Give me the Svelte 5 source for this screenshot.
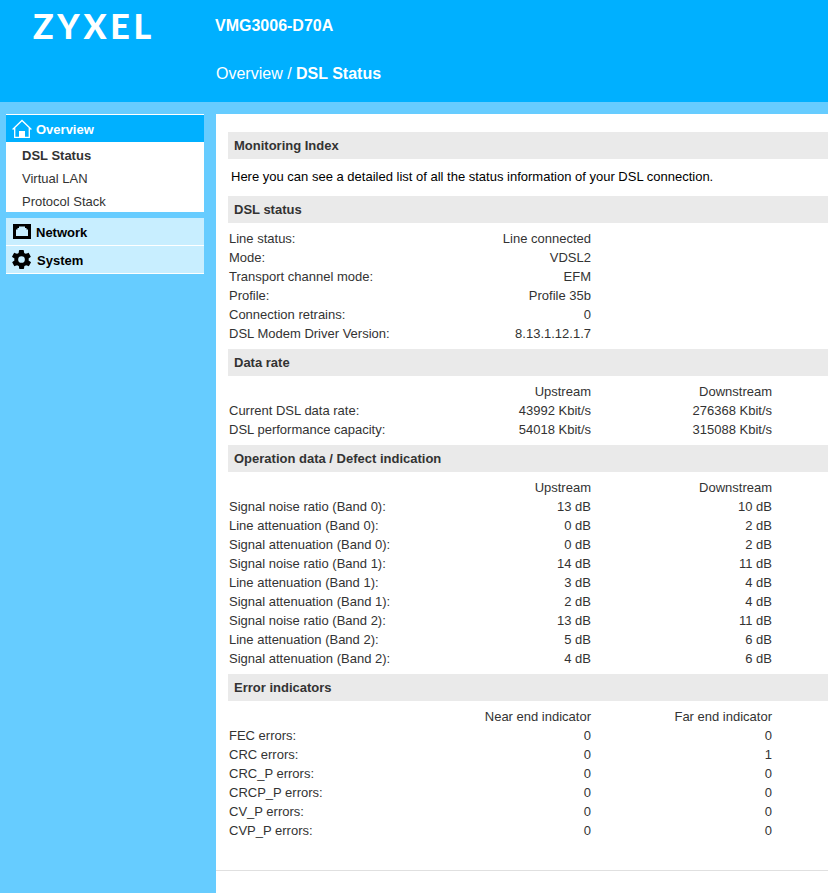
<script>
	const subMenu = [
		{ label: "DSL Status", active: true },
		{ label: "Virtual LAN" },
		{ label: "Protocol Stack" },
	]

	const sections = [
		{
			title: "DSL status",
			rows: [
				["Line status:", "Line connected", ""],
				["Mode:", "VDSL2", ""],
				["Transport channel mode:", "EFM", ""],
				["Profile:", "Profile 35b", ""],
				["Connection retrains:", "0", ""],
				["DSL Modem Driver Version:", "8.13.1.12.1.7", ""],
			],
		},
		{
			title: "Data rate",
			rows: [
				["", "Upstream", "Downstream"],
				["Current DSL data rate:", "43992 Kbit/s", "276368 Kbit/s"],
				["DSL performance capacity:", "54018 Kbit/s", "315088 Kbit/s"],
			],
		},
		{
			title: "Operation data / Defect indication",
			rows: [
				["", "Upstream", "Downstream"],
				["Signal noise ratio (Band 0):", "13 dB", "10 dB"],
				["Line attenuation (Band 0):", "0 dB", "2 dB"],
				["Signal attenuation (Band 0):", "0 dB", "2 dB"],
				["Signal noise ratio (Band 1):", "14 dB", "11 dB"],
				["Line attenuation (Band 1):", "3 dB", "4 dB"],
				["Signal attenuation (Band 1):", "2 dB", "4 dB"],
				["Signal noise ratio (Band 2):", "13 dB", "11 dB"],
				["Line attenuation (Band 2):", "5 dB", "6 dB"],
				["Signal attenuation (Band 2):", "4 dB", "6 dB"],
			],
		},
		{
			title: "Error indicators",
			rows: [
				["", "Near end indicator", "Far end indicator"],
				["FEC errors:", "0", "0"],
				["CRC errors:", "0", "1"],
				["CRC_P errors:", "0", "0"],
				["CRCP_P errors:", "0", "0"],
				["CV_P errors:", "0", "0"],
				["CVP_P errors:", "0", "0"],
			],
		},
	]
</script>

<div class="page">
	<header class="top">
		<div class="logo">ZYXEL</div>
		<div class="titles">
			<div class="model">VMG3006-D70A</div>
			<div class="crumb">Overview / <b>DSL Status</b></div>
		</div>
	</header>

	<div class="body">
		<nav class="side">
			<div class="menu-head open">
				<svg width="20" height="20" viewBox="0 0 20 20" fill="none" stroke="#fff" stroke-width="1.3">
					<path d="M.6 10.500 10 1.500l9.400 9" />
					<path d="M2.700 9v9.300h14.600V9" />
					<rect x="7" y="12" width="6" height="6.500" fill="#fff" stroke="none" />
				</svg>
				<span>Overview</span>
			</div>
			<ul class="sub">
				{#each subMenu as item}
					<li class:active={item.active}>{item.label}</li>
				{/each}
			</ul>

			<div class="menu-head closed first">
				<svg width="18" height="15" viewBox="0 0 18 15">
					<path fill-rule="evenodd" fill="#000" d="M0 0h18v15H0zM3 12h12V5.500h-1.500V4H12V2.500H6V4H4.500v1.500H3z" />
				</svg>
				<span>Network</span>
			</div>
			<div class="menu-head closed gear">
				<svg width="23" height="23" viewBox="0 0 24 24">
					<path fill="#000" d="M19.400 13c.1-.3.1-.7.100-1s0-.7-.1-1l2.100-1.600c.2-.1.2-.4.100-.6l-2-3.500c-.1-.2-.4-.3-.6-.2l-2.500 1c-.5-.4-1.100-.7-1.700-1l-.4-2.600c0-.3-.2-.5-.5-.5h-4c-.2 0-.5.200-.5.500l-.4 2.600c-.6.300-1.200.6-1.700 1l-2.500-1c-.2-.1-.5 0-.6.200l-2 3.500c-.1.200-.1.500.1.600L4.600 11c0 .3-.1.700-.1 1s0 .7.100 1l-2.100 1.600c-.2.100-.2.400-.1.600l2 3.500c.1.200.4.300.6.200l2.500-1c.5.400 1.100.7 1.700 1l.4 2.600c0 .3.300.5.500.5h4c.3 0 .5-.2.500-.5l.4-2.600c.6-.3 1.200-.6 1.700-1l2.500 1c.2.100.5 0 .6-.2l2-3.500c.1-.2.100-.5-.1-.6L19.400 13zM12 15.500a3.500 3.500 0 1 1 0-7 3.500 3.500 0 0 1 0 7z" />
				</svg>
				<span>System</span>
			</div>
		</nav>

		<main class="content">
			<div class="inner">
				<h2>Monitoring Index</h2>
				<p class="intro">Here you can see a detailed list of all the status information of your DSL connection.</p>

				{#each sections as section}
					<h2>{section.title}</h2>
					<div class="table">
						{#each section.rows as row}
							<div class="row">
								<span>{row[0]}</span>
								<span class="num">{row[1]}</span>
								<span class="num">{row[2]}</span>
							</div>
						{/each}
					</div>
				{/each}
			</div>
		</main>
	</div>
</div>

<style>
	:global(body) {
		background: #66ccff;
		overflow: hidden;
	}

	.page {
		height: 893px;
		display: flex;
		flex-direction: column;
		font-family: "Liberation Sans", Arial, sans-serif;
		font-size: 13px;
		color: #333;
		overflow: hidden;
	}

	.top {
		height: 102px;
		flex: none;
		background: #00b0ff;
		color: #fff;
		display: flex;
	}

	.logo {
		width: 215px;
		padding: 7px 0 0 33px;
		box-sizing: border-box;
		font-family: Lato, sans-serif;
		font-size: 34px;
		font-weight: 900;
		letter-spacing: 3.7px;
		line-height: 38px;
	}

	.model {
		font-size: 16px;
		font-weight: bold;
		line-height: 20px;
		margin-top: 16px;
	}

	.crumb {
		font-size: 16px;
		line-height: 20px;
		margin: 28px 0 0 1px;
	}

	.body {
		flex: 1;
		display: flex;
		padding-top: 12px;
	}

	.side {
		width: 198px;
		margin: 0 12px 0 6px;
		flex: none;
	}

	.menu-head {
		display: flex;
		align-items: center;
		font-weight: bold;
		box-sizing: border-box;
	}

	.menu-head span {
		margin-top: 2px;
	}

	.open {
		height: 28px;
		background: #00b0ff;
		border-top: 1px solid #fff;
		color: #fff;
		padding-left: 6px;
		gap: 4px;
	}

	.closed {
		height: 28px;
		background: #c8eeff;
		border-bottom: 1px solid #fff;
		color: #000;
		padding-left: 7px;
		gap: 5px;
	}

	.gear {
		padding-left: 4px;
		gap: 4px;
	}

	.first {
		margin-top: 6px;
	}

	.sub {
		list-style: none;
		margin: 0;
		padding: 2px 0 0;
		background: #fff;
		height: 70px;
		box-sizing: border-box;
	}

	.sub li {
		height: 23px;
		line-height: 23px;
		padding-left: 16px;
	}

	.sub li.active {
		font-weight: bold;
	}

	.content {
		flex: 1;
		background: #fff;
		min-width: 0;
	}

	.inner {
		padding: 18px 0 0 12px;
		height: 757px;
		box-sizing: border-box;
		border-bottom: 1px solid #e0e0e0;
	}

	h2 {
		margin: 0;
		height: 27px;
		line-height: 27px;
		padding-left: 6px;
		background: #eaeaea;
		font-size: 13px;
		font-weight: bold;
		color: #333;
	}

	.intro {
		margin: 0;
		height: 37px;
		line-height: 36px;
		padding-left: 3px;
		color: #000;
	}

	.table {
		padding: 6px 0;
	}

	.row {
		display: grid;
		grid-template-columns: 200px 162px 181px;
		padding-left: 1px;
		height: 19px;
		line-height: 19px;
	}

	.num {
		text-align: right;
	}
</style>
